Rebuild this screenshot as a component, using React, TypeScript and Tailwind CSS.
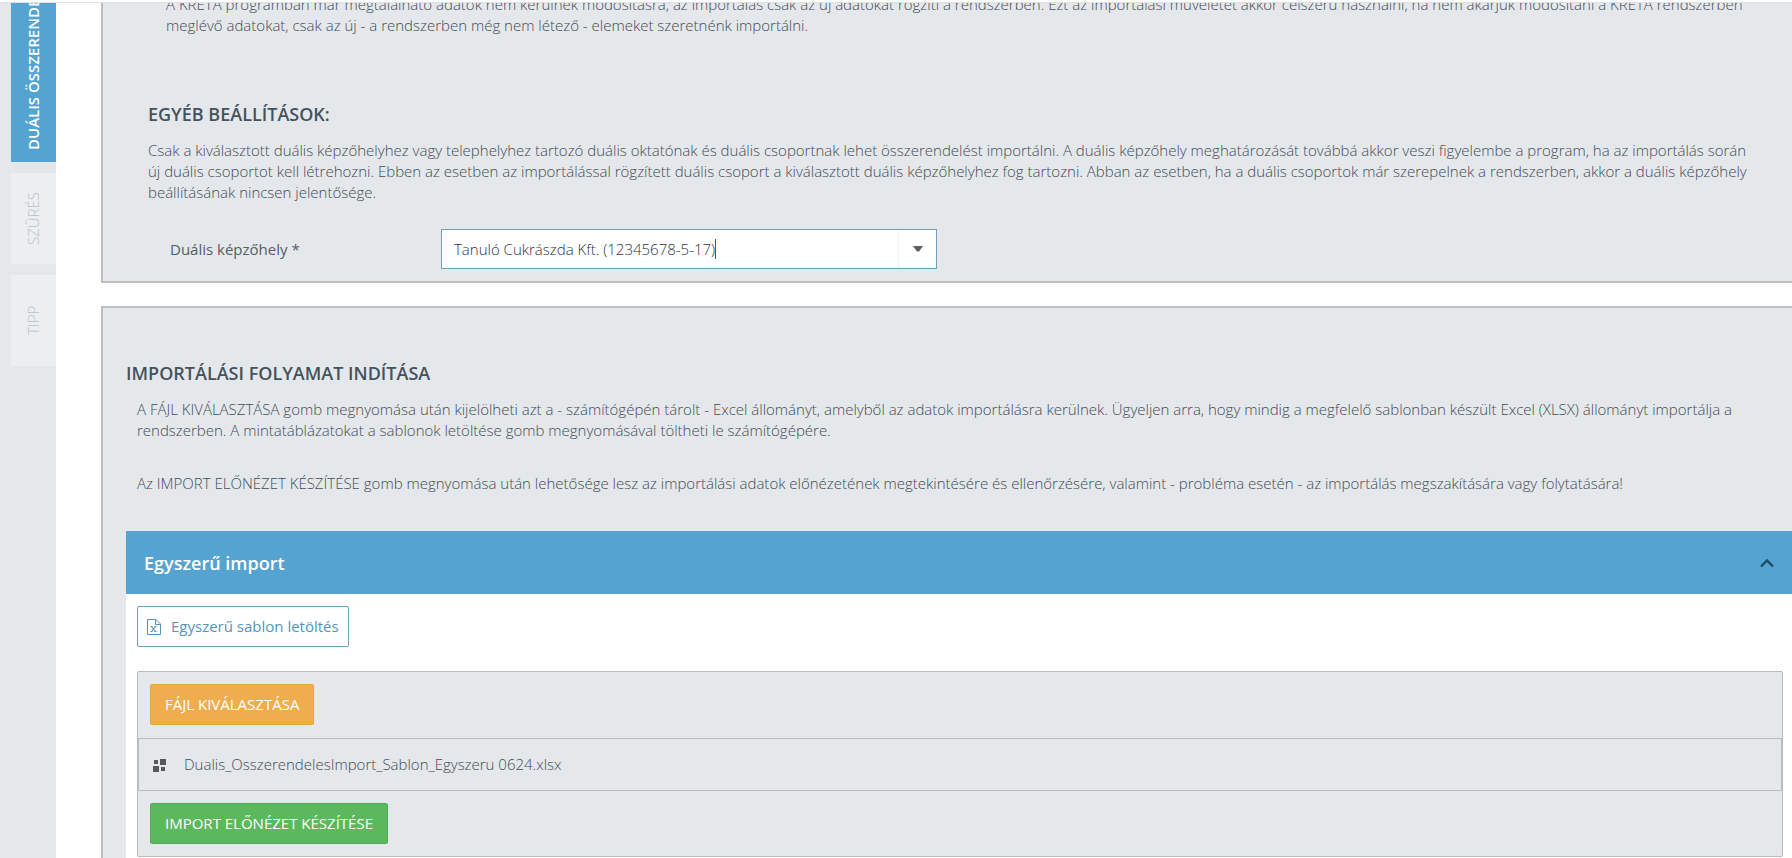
import { useState } from "react";

const sideTabs = ["SZŰRÉS", "TIPP"];

function ExcelIcon() {
  return (
    <svg width="14" height="16" viewBox="0 0 14 16" fill="none" stroke="currentColor" aria-hidden="true">
      <path d="M0.5 0.5H9L13.5 5V15.5H0.5Z" />
      <path d="M8.5 0.5V5.5H13.5" />
      <path d="M4.5 7.5L8.5 12.5M8.5 7.5L4.5 12.5" strokeWidth="1.2" />
      <path d="M3.5 7.5H5.5M7.5 7.5H9.5M3.5 12.5H5.5M7.5 12.5H9.5" />
    </svg>
  );
}

function FileIcon() {
  return (
    <svg width="14" height="14" viewBox="0 0 14 14" fill="currentColor" aria-hidden="true">
      <rect x="1" y="2" width="4" height="4" />
      <rect x="7" y="1" width="6" height="6" />
      <rect x="0" y="8" width="6" height="6" />
      <rect x="8" y="9" width="4" height="4" />
    </svg>
  );
}

function SideBar() {
  return (
    <nav className="flex w-14 shrink-0 flex-col bg-[#e4e8eb] pl-[11px]">
      <button type="button" className="flex h-[159px] rotate-180 items-center overflow-hidden bg-[#54a3d1] pt-3 font-semibold text-white [writing-mode:vertical-rl]">
        <span className="whitespace-nowrap">DUÁLIS ÖSSZERENDELÉSEK</span>
      </button>
      {sideTabs.map((tab) => (
        <button
          key={tab}
          type="button"
          className="mt-[11px] flex h-[91px] rotate-180 items-center justify-center bg-[#ebeff2] text-[#bbc0c5] [writing-mode:vertical-rl]"
        >
          {tab}
        </button>
      ))}
    </nav>
  );
}

export default function App() {
  const [place, setPlace] = useState("Tanuló Cukrászda Kft. (12345678-5-17)");
  const [open, setOpen] = useState(true);

  return (
    <div className="flex h-screen flex-col overflow-hidden bg-white font-['Open_Sans',sans-serif] text-[15px] leading-[21px] font-light text-[#434b57]">
      <div className="h-[3px] shrink-0 border-b border-[#dfe2e5] bg-white" />
      <div className="flex min-h-0 flex-1">
        <SideBar />

        <main className="min-w-0 flex-1 overflow-hidden pl-[45px]">
          <section className="border-b-2 border-l-2 border-[#bbbdbf] bg-[#e4e8eb] pr-8 pb-3 pl-[45px]">
            <p className="-mt-[9px] pl-[18px]">
              A KRÉTA programban már megtalálható adatok nem kerülnek módosításra, az importálás csak az új adatokat rögzíti a
              rendszerben. Ezt az importálási műveletet akkor célszerű használni, ha nem akarjuk módosítani a KRÉTA rendszerben
              meglévő adatokat, csak az új - a rendszerben még nem létező - elemeket szeretnénk importálni.
            </p>
            <h2 className="mt-[66px] text-lg leading-6 font-semibold text-[#45525e]">EGYÉB BEÁLLÍTÁSOK:</h2>
            <p className="mt-[14px]">
              Csak a kiválasztott duális képzőhelyhez vagy telephelyhez tartozó duális oktatónak és duális csoportnak lehet
              összerendelést importálni. A duális képzőhely meghatározását továbbá akkor veszi figyelembe a program, ha az
              importálás során új duális csoportot kell létrehozni. Ebben az esetben az importálással rögzített duális csoport a
              kiválasztott duális képzőhelyhez fog tartozni. Abban az esetben, ha a duális csoportok már szerepelnek a
              rendszerben, akkor a duális képzőhely beállításának nincsen jelentősége.
            </p>
            <div className="mt-[26px] flex items-center pl-[22px]">
              <label htmlFor="place" className="w-[271px] font-medium text-[#555c67]">
                Duális képzőhely *
              </label>
              <div className="flex h-10 w-[496px] border border-[#6f9fbe] bg-white">
                <div className="flex flex-1 items-center pl-3">
                  <input
                    id="place"
                    value={place}
                    onChange={(event) => setPlace(event.target.value)}
                    className="text-[#2c343e] outline-none [field-sizing:content]"
                  />
                  <span className="h-5 w-px bg-[#2f5f80]" />
                </div>
                <button type="button" aria-label="Lista megnyitása" className="flex w-[38px] items-center justify-center border-l border-[#f1f2f3] text-[#5c5f63]">
                  <svg width="10" height="6" viewBox="0 0 10 6" fill="currentColor">
                    <path d="M0 0H10L6 5.5H4Z" />
                  </svg>
                </button>
              </div>
            </div>
          </section>

          <section className="mt-[23px] border-t-2 border-l-2 border-[#bbbdbf] bg-[#e4e8eb] pt-[53px] pl-[23px]">
            <h2 className="text-lg leading-6 font-semibold text-[#45525e]">IMPORTÁLÁSI FOLYAMAT INDÍTÁSA</h2>
            <div className="mt-[14px] pr-8 pl-[11px]">
              <p>
                A FÁJL KIVÁLASZTÁSA gomb megnyomása után kijelölheti azt a - számítógépén tárolt - Excel állományt, amelyből az
                adatok importálásra kerülnek. Ügyeljen arra, hogy mindig a megfelelő sablonban készült Excel (XLSX) állományt
                importálja a rendszerben. A mintatáblázatokat a sablonok letöltése gomb megnyomásával töltheti le számítógépére.
              </p>
              <p className="mt-8">
                Az IMPORT ELŐNÉZET KÉSZÍTÉSE gomb megnyomása után lehetősége lesz az importálási adatok előnézetének
                megtekintésére és ellenőrzésére, valamint - probléma esetén - az importálás megszakítására vagy folytatására!
              </p>
            </div>

            <button
              type="button"
              aria-expanded={open}
              onClick={() => setOpen(!open)}
              className="mt-[37px] flex h-[63px] w-full items-center justify-between bg-[#54a3d1] px-[18px] text-lg font-semibold text-white"
            >
              Egyszerű import
              <svg width="14" height="10" viewBox="0 0 14 10" fill="none" stroke="#1d4a68" strokeWidth="2.4">
                <path d="M1 8.5L7 2.5L13 8.5" />
              </svg>
            </button>
            {open ? (
              <div className="bg-white pt-3 pr-[9px] pb-3 pl-[11px]">
                <button type="button" className="flex h-[41px] items-center gap-[10px] rounded-xs border border-[#6a9fbf] bg-white px-[9px] font-medium text-[#5593bd]">
                  <ExcelIcon />
                  Egyszerű sablon letöltés
                </button>
                <div className="mt-6 rounded-xs border border-[#b9bdc0] bg-[#e4e8eb]">
                  <div className="px-3 pt-3 pb-[13px]">
                    <button type="button" className="h-[41px] rounded-xs border border-[#e3a548] bg-[#f0ad4e] px-[14px] font-normal text-white">
                      FÁJL KIVÁLASZTÁSA
                    </button>
                  </div>
                  <div className="flex h-[53px] items-center gap-[17px] border border-[#b9bdc0] pl-[14px]">
                    <span className="text-[#54585d]">
                      <FileIcon />
                    </span>
                    Dualis_OsszerendelesImport_Sablon_Egyszeru 0624.xlsx
                  </div>
                  <div className="p-3">
                    <button type="button" className="h-[41px] rounded-xs border border-[#52ad52] bg-[#5cb85c] px-[14px] font-normal text-white">
                      IMPORT ELŐNÉZET KÉSZÍTÉSE
                    </button>
                  </div>
                </div>
              </div>
            ) : null}
          </section>
        </main>
      </div>
    </div>
  );
}
